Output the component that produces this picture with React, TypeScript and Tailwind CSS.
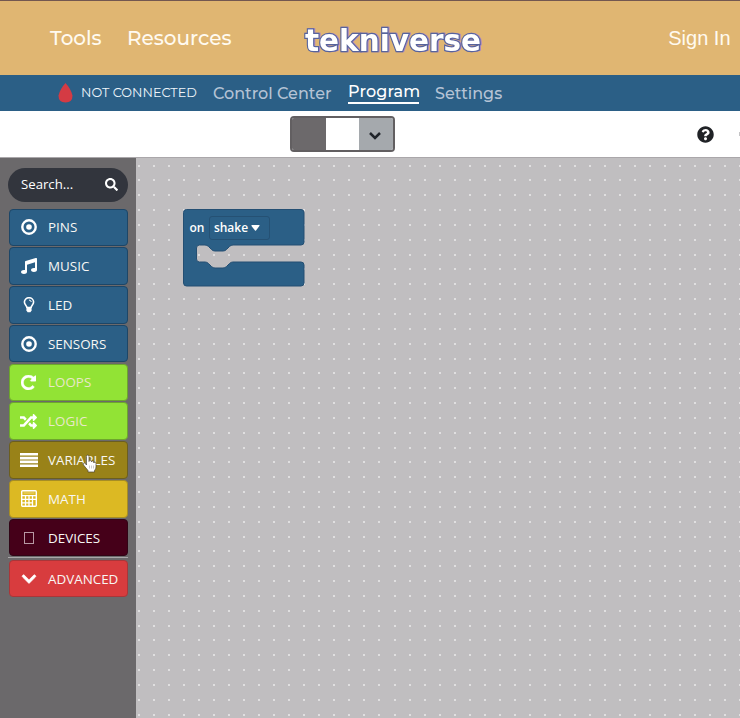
import type { ReactNode } from "react";
import { FaMusic, FaRandom, FaSearch, FaQuestionCircle, FaChevronDown } from "react-icons/fa";

const Target = () => (
  <svg viewBox="0 0 16 16" className="size-4">
    <circle cx="8" cy="8" r="6.7" fill="none" stroke="white" strokeWidth="2.4" />
    <circle cx="8" cy="8" r="2.8" fill="white" />
  </svg>
);

const Bulb = () => (
  <svg viewBox="0 0 12 16" className="h-4 w-3" fill="none" stroke="white">
    <path d="M4 11 C4 8.5 1.4 8 1.4 5.1 A4.6 4.4 0 0 1 10.6 5.1 C10.6 8 8 8.5 8 11" strokeWidth="1.6" />
    <path d="M6 3 Q8 3.2 8.3 5" strokeWidth="1" />
    <path d="M3.4 9.8h5.2v3.7l-1.2 1.8H4.6l-1.2-1.8z" fill="white" stroke="none" />
  </svg>
);

const Repeat = () => (
  <svg viewBox="128 128 1536 1536" className="size-[15px]" fill="white" stroke="white" strokeWidth="40">
    <path d="M1664 256v448q0 26-19 45t-45 19h-448q-42 0-59-40-17-39 14-69l138-138q-148-137-349-137-104 0-198.5 40.5t-163.5 109.5-109.5 163.5-40.5 198.5 40.5 198.5 109.5 163.5 163.5 109.5 198.5 40.5q119 0 225-52t179-147q7-10 23-12 15 0 25 9l137 138q9 8 9.5 20.5t-7.5 22.5q-109 132-264 204.5t-327 72.5q-156 0-298-61t-245-164-164-245-61-298 61-298 164-245 245-164 298-61q147 0 284.5 55.5t244.5 156.5l130-129q29-31 70-14 39 17 39 59z" />
  </svg>
);

const Lines = () => (
  <svg viewBox="0 0 18 14" className="h-3.5 w-[18px]" fill="white">
    <path d="M0 0h18v2.6H0zM0 3.8h18v2.6H0zM0 7.6h18v2.6H0zM0 11.4h18V14H0z" />
  </svg>
);

const Calculator = () => (
  <svg viewBox="0 0 16 17" className="h-[17px] w-4">
    <rect x="0.7" y="0.7" width="14.6" height="15.6" rx="1" fill="none" stroke="white" strokeWidth="1.4" />
    <path d="M1 5.7h14M1 9.3h14M1 12.8h10.5M4.5 6v10M8 6v10M11.5 6v10" stroke="white" strokeWidth="1.3" />
    <path d="M2.6 2.4h10.8v1.2H2.6z" fill="white" opacity="0.35" />
  </svg>
);

const Tofu = () => <span className="h-3 w-[10px] border border-[#b898a4]" />;

type Category = { name: string; color: string; icon: ReactNode; text?: string };

const categories: Category[] = [
  { name: "PINS", color: "bg-[#2b5f86] border-[#1d4667]", icon: <Target /> },
  { name: "MUSIC", color: "bg-[#2b5f86] border-[#1d4667]", icon: <FaMusic className="size-4" /> },
  { name: "LED", color: "bg-[#2b5f86] border-[#1d4667]", icon: <Bulb /> },
  { name: "SENSORS", color: "bg-[#2b5f86] border-[#1d4667]", icon: <Target /> },
  { name: "LOOPS", color: "bg-[#92e335] border-[#6da62d]", icon: <Repeat />, text: "text-[#e9e8c8]" },
  { name: "LOGIC", color: "bg-[#92e335] border-[#6da62d]", icon: <FaRandom className="size-[17px]" />, text: "text-[#e9e8c8]" },
  { name: "VARIABLES", color: "bg-[#998218] border-[#6b5e20]", icon: <Lines /> },
  { name: "MATH", color: "bg-[#dcb923] border-[#a68d24]", icon: <Calculator /> },
  { name: "DEVICES", color: "bg-[#450019] border-[#300516]", icon: <Tofu /> },
];

function CategoryRow({ name, color, icon, text = "text-[#f8f7f4]" }: Category) {
  return (
    <div className={`flex h-[37.5px] w-[119.5px] items-center rounded-[4px] border ${color} text-white`}>
      <span className="ml-[7px] flex w-6 justify-center">{icon}</span>
      <span className={`ml-[7.5px] text-[13.4px] ${text}`}>{name}</span>
    </div>
  );
}

const columns = Array.from({ length: 41 }, (_, i) => Math.round(2 + i * 15.03));
const rows = Array.from({ length: 38 }, (_, i) => Math.round(6.6 + i * 14.84));

function Workspace() {
  return (
    <main className="relative flex-1 overflow-hidden bg-[#c0bec0]">
      <svg className="block h-full w-full" viewBox="0 0 604 560">
        {rows.map((y) =>
          columns.map((x) => <rect key={`${x}-${y}`} x={x} y={y} width="2" height="2" fill="#e0dfe0" />),
        )}
      </svg>
      <div className="absolute top-[50px] left-[46px] h-20 w-[124px]">
        <svg className="absolute inset-0" viewBox="0 0 124 80" width="124" height="80">
          <path
            d="M4.5 1.5H119Q122 1.5 122 4.5V34Q122 37 119 37H51Q49 37 47.5 38.5L44.500 41.5Q43 43 41 43H33Q31 43 29.5 41.5L26.5 38.5Q25 37 23 37H17.500Q14.500 37 14.500 40V51Q14.500 54 17.500 54H23Q25 54 26.500 55.500L29.500 58.500Q31 60 33 60H41Q43 60 44.500 58.500L47.500 55.500Q49 54 51 54H119Q122 54 122 57V75Q122 78 119 78H4.500Q1.500 78 1.500 75V4.500Q1.500 1.500 4.500 1.500Z"
            fill="#2b5f86"
            stroke="#244f73"
          />
        </svg>
        <div className="relative flex h-[39px] items-center pl-[7.5px] text-xs font-semibold text-white">
          <span className="w-[19px]">on</span>
          <span className="flex h-6 w-[61px] items-center justify-center gap-[3px] rounded-[3px] border border-[#255174]">
            shake
            <svg viewBox="0 0 9 6" className="mr-1 h-1.5 w-[9px]" fill="white">
              <path d="M1 0h7q1 0 .4.9L5 5.5q-.5.6-1 0L.5.9Q0 0 1 0z" />
            </svg>
          </span>
        </div>
      </div>
    </main>
  );
}

export default function App() {
  return (
    <div className="relative flex h-[718px] w-[740px] flex-col overflow-hidden bg-white font-['Open_Sans','Noto_Sans',sans-serif]">
      <header className="flex h-[75px] shrink-0 items-center border-t border-[#735750] bg-[#e0b672] pl-[50px] font-['Montserrat','Inter',sans-serif] text-[20px] font-medium text-[#fffaf0]">
        <span className="w-[77px]">Tools</span>
        <span className="w-[174px]">Resources</span>
        <svg className="h-[60px] w-[188px] drop-shadow-[1px_0_0_#a884c4]" viewBox="0 0 188 60">
          <g fontFamily="DejaVu Sans" fontWeight="700" fontSize="31" paintOrder="stroke" strokeLinejoin="miter">
            <text x="4" y="43" textLength="176" lengthAdjust="spacingAndGlyphs" fill="white" stroke="#56639c" strokeWidth="2.4">
              tekniverse
            </text>
          </g>
        </svg>
        <span className="ml-auto pr-[9.5px] font-['Liberation_Sans',sans-serif] text-[20px] font-normal">Sign In</span>
      </header>

      <nav className="flex h-9 shrink-0 items-center bg-[#2b5f86] pl-[58px] font-['Montserrat','Inter',sans-serif] text-[#b5c3d5]">
        <svg viewBox="0 0 15 20" className="h-5 w-[15px]">
          <path d="M7.5 0Q13 6 14.5 12.5Q14.5 19.5 7.5 19.5T.5 12.5Q2 6 7.5 0z" fill="#d43b44" />
        </svg>
        <span className="ml-2 w-[132px] text-[12.8px] text-[#eef5fa]">NOT CONNECTED</span>
        <span className="w-[135px] pt-0.5 text-[16px] font-medium">Control Center</span>
        <span className="mr-4 h-[22px] w-[71px] border-b-2 border-white text-[16px] leading-[19px] font-medium tracking-[0.15px] text-white">
          Program
        </span>
        <span className="pt-0.5 text-[16px] font-medium">Settings</span>
      </nav>

      <div className="flex h-[46px] shrink-0 items-center">
        <div className="ml-[290px] flex h-9 w-[105px] overflow-hidden rounded-[4px] border-2 border-[#625f61] bg-white">
          <span className="w-[34px] bg-[#6c696b]" />
          <span className="w-[33px] bg-white" />
          <span className="flex flex-1 items-center justify-center bg-[#a5a9ad]">
            <svg viewBox="0 0 12 8" className="mt-[3px] mr-0.5 h-2 w-3" fill="none" stroke="#20242a" strokeWidth="2.5">
              <path d="M1 1l5 5 5-5" />
            </svg>
          </span>
        </div>
        <FaQuestionCircle className="ml-auto size-[17px] text-[#202226]" />
        <span className="ml-[25px] h-1 w-px bg-[#c4c4c6]" />
      </div>

      <div className="flex min-h-0 flex-1 border-t border-[#aaa7aa]">
        <aside className="w-[136px] shrink-0 bg-[#6b696b] pl-2">
          <div className="mt-[9.5px] mb-[7px] flex h-[34px] w-[120px] items-center justify-between rounded-full bg-[#32353d] pr-2.5 pl-[13px] text-[13.2px] text-white">
            Search...
            <FaSearch className="size-[13px]" />
          </div>
          <div className="flex flex-col gap-[1.3px] pl-[0.5px]">
            {categories.map((c) => (
              <CategoryRow key={c.name} {...c} />
            ))}
          </div>
          <div className="mt-px mb-[1.5px] h-px w-[120px] bg-[#a9a7a9]" />
          <div className="pl-[0.5px]">
            <CategoryRow
              name="ADVANCED"
              color="bg-[#d83c3e] border-[#a93639]"
              icon={<FaChevronDown className="size-4" stroke="white" strokeWidth="24" />}
            />
          </div>
        </aside>
        <Workspace />
      </div>

      <svg className="absolute top-[454px] left-[82px] h-[19px] w-[15px]" viewBox="0 0 15 19">
        <path
          d="M4.5 11V2.5Q4.5 1 5.7 1T7 2.5V7.5Q7 6.3 8.2 6.3T9.4 7.5V8Q9.4 7 10.6 7T11.8 8.3V9Q11.8 8 12.9 8T14 9.5V13Q14 15 12.5 16.5V18H6V16.5L1.5 11Q.8 9.8 1.8 9.2T3.5 9.7Z"
          fill="white"
          stroke="#4a4430"
          strokeWidth="0.7"
        />
        <path d="M7.5 11.5v3M9.5 11.5v3M11.5 11.5v3" stroke="#999" strokeWidth="0.5" />
      </svg>
    </div>
  );
}
